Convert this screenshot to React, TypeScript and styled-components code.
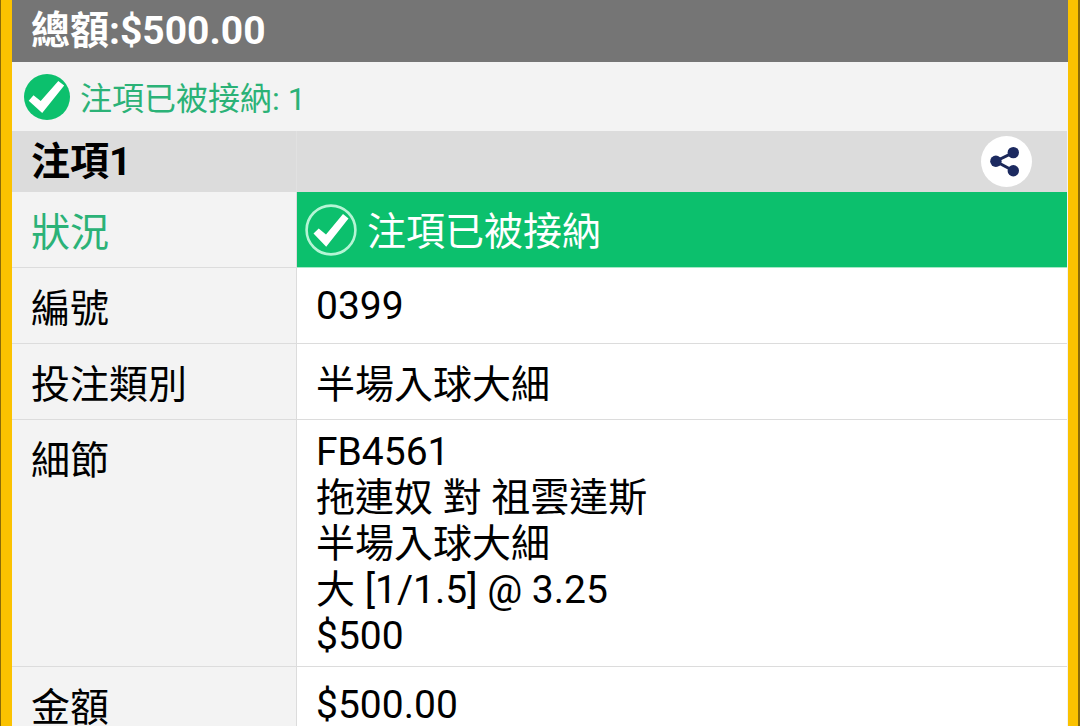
import React from "react";
import styled, { createGlobalStyle } from "styled-components";

const GlobalStyle = createGlobalStyle`
  *, *::before, *::after { box-sizing: border-box; }
  body {
    margin: 0;
    background: #f3f3f3;
    color: #000;
    font-family: Roboto, "Noto Sans CJK TC", sans-serif;
    font-size: 39px;
    line-height: 46px;
  }
`;

const Frame = styled.main`
  min-height: 100vh;
  padding: 0 10px 0 11px;
  background: #fbc200;
  border: solid #8a6a08;
  border-width: 0 2px 0 1px;
`;

const Panel = styled.div`
  min-height: 100vh;
  background: #f3f3f3;
`;

const TotalBar = styled.header`
  display: flex;
  align-items: center;
  height: 62px;
  padding: 0 19px;
  background: #757575;
  color: #fff;
  font-weight: 700;
`;

const Notice = styled.p`
  display: flex;
  align-items: center;
  gap: 10px;
  height: 69px;
  margin: 0;
  padding: 0 12px;
  color: #2bb277;
  font-size: 32px;
`;

const StatusText = styled.span`
  padding-top: 4px;
`;

const BetTable = styled.table`
  width: 100%;
  table-layout: fixed;
  border-collapse: separate;
  border-spacing: 0;
  padding-right: 1px;
`;

const LabelColumn = styled.col`
  width: 285px;
`;

const TitleRow = styled.tr`
  height: 61px;
  background: #dcdcdc;
`;

const TitleCell = styled.th`
  padding: 0 19px;
  text-align: left;
  font-weight: 700;
  border-right: 1px solid #e1e1e1;
`;

const ActionCell = styled.td`
  padding: 0 35px 0 0;
`;

const ShareButton = styled.button`
  display: flex;
  width: 51px;
  height: 51px;
  margin-left: auto;
  padding: 0;
  border: 0;
  border-radius: 50%;
  background: #fff;
  cursor: pointer;
`;

const Label = styled.th<{ $accepted?: boolean }>`
  padding: 18px 19px 11px;
  border: solid #dcdcdc;
  border-width: 0 1px 1px 0;
  background: #f3f3f3;
  color: ${(p) => (p.$accepted ? "#2bb277" : "#000")};
  font-weight: 400;
  text-align: left;
  vertical-align: top;
`;

const valuePadding = {
  number: "15px 19px 14px",
  text: "18px 19px 11px",
  lines: "9px 19px 7px",
};

const Value = styled.td<{ $kind: keyof typeof valuePadding }>`
  padding: ${(p) => valuePadding[p.$kind]};
  border-bottom: 1px solid #dcdcdc;
  background: #fff;
  vertical-align: top;
`;

const StatusValue = styled.td`
  padding: 0 8px;
  border-bottom: 1px solid #a5e8c6;
  background: #0cc06d;
  color: #fff;
`;

const StatusContent = styled.div`
  display: flex;
  align-items: center;
  gap: 10px;
`;

const DetailLine = styled.div``;

function AcceptedIcon() {
  return (
    <svg width="46" height="46" viewBox="0 0 46 46" aria-hidden="true">
      <circle cx="23" cy="23" r="23" fill="#0cc06d" />
      <path d="M4.7 26.7 9.5 21.2 16.7 27 34.3 7 40.2 11.5 18.2 39Z" fill="#fff" />
    </svg>
  );
}

function StatusIcon() {
  return (
    <svg width="52" height="52" viewBox="0 0 52 52" aria-hidden="true">
      <circle cx="26" cy="26" r="24.4" fill="none" stroke="#b5f5d5" strokeWidth="2.6" />
      <path d="M8.5 29.5 13.7 24.5 21 30.5 38 10 43.5 14.5 21.2 42.7Z" fill="#fff" />
    </svg>
  );
}

function ShareIcon() {
  return (
    <svg width="51" height="51" viewBox="0 0 51 51" aria-hidden="true">
      <path d="M32.3 16.7 14.7 25.2 32.3 34.7" fill="none" stroke="#1c2858" strokeWidth="3" />
      <g fill="#1c2a60">
        <circle cx="14.9" cy="25.2" r="5.7" />
        <circle cx="32.3" cy="16.6" r="5.7" />
        <circle cx="32.3" cy="34.8" r="5.7" />
      </g>
    </svg>
  );
}

const details = ["FB4561", "拖連奴 對 祖雲達斯", "半場入球大細", "大 [1/1.5] @ 3.25", "$500"];

export default function App() {
  return (
    <>
      <GlobalStyle />
      <Frame lang="zh-Hant">
        <Panel>
          <TotalBar>總額:$500.00</TotalBar>
          <Notice>
            <AcceptedIcon />
            <StatusText>注項已被接納: 1</StatusText>
          </Notice>
          <BetTable>
            <colgroup>
              <LabelColumn />
              <col />
            </colgroup>
            <thead>
              <TitleRow>
                <TitleCell scope="col">注項1</TitleCell>
                <ActionCell>
                  <ShareButton type="button" aria-label="分享">
                    <ShareIcon />
                  </ShareButton>
                </ActionCell>
              </TitleRow>
            </thead>
            <tbody>
              <tr>
                <Label scope="row" $accepted>狀況</Label>
                <StatusValue>
                  <StatusContent>
                    <StatusIcon />
                    <StatusText>注項已被接納</StatusText>
                  </StatusContent>
                </StatusValue>
              </tr>
              <tr>
                <Label scope="row">編號</Label>
                <Value $kind="number">0399</Value>
              </tr>
              <tr>
                <Label scope="row">投注類別</Label>
                <Value $kind="text">半場入球大細</Value>
              </tr>
              <tr>
                <Label scope="row">細節</Label>
                <Value $kind="lines">
                  {details.map((line) => (
                    <DetailLine key={line}>{line}</DetailLine>
                  ))}
                </Value>
              </tr>
              <tr>
                <Label scope="row">金額</Label>
                <Value $kind="number">$500.00</Value>
              </tr>
            </tbody>
          </BetTable>
        </Panel>
      </Frame>
    </>
  );
}
